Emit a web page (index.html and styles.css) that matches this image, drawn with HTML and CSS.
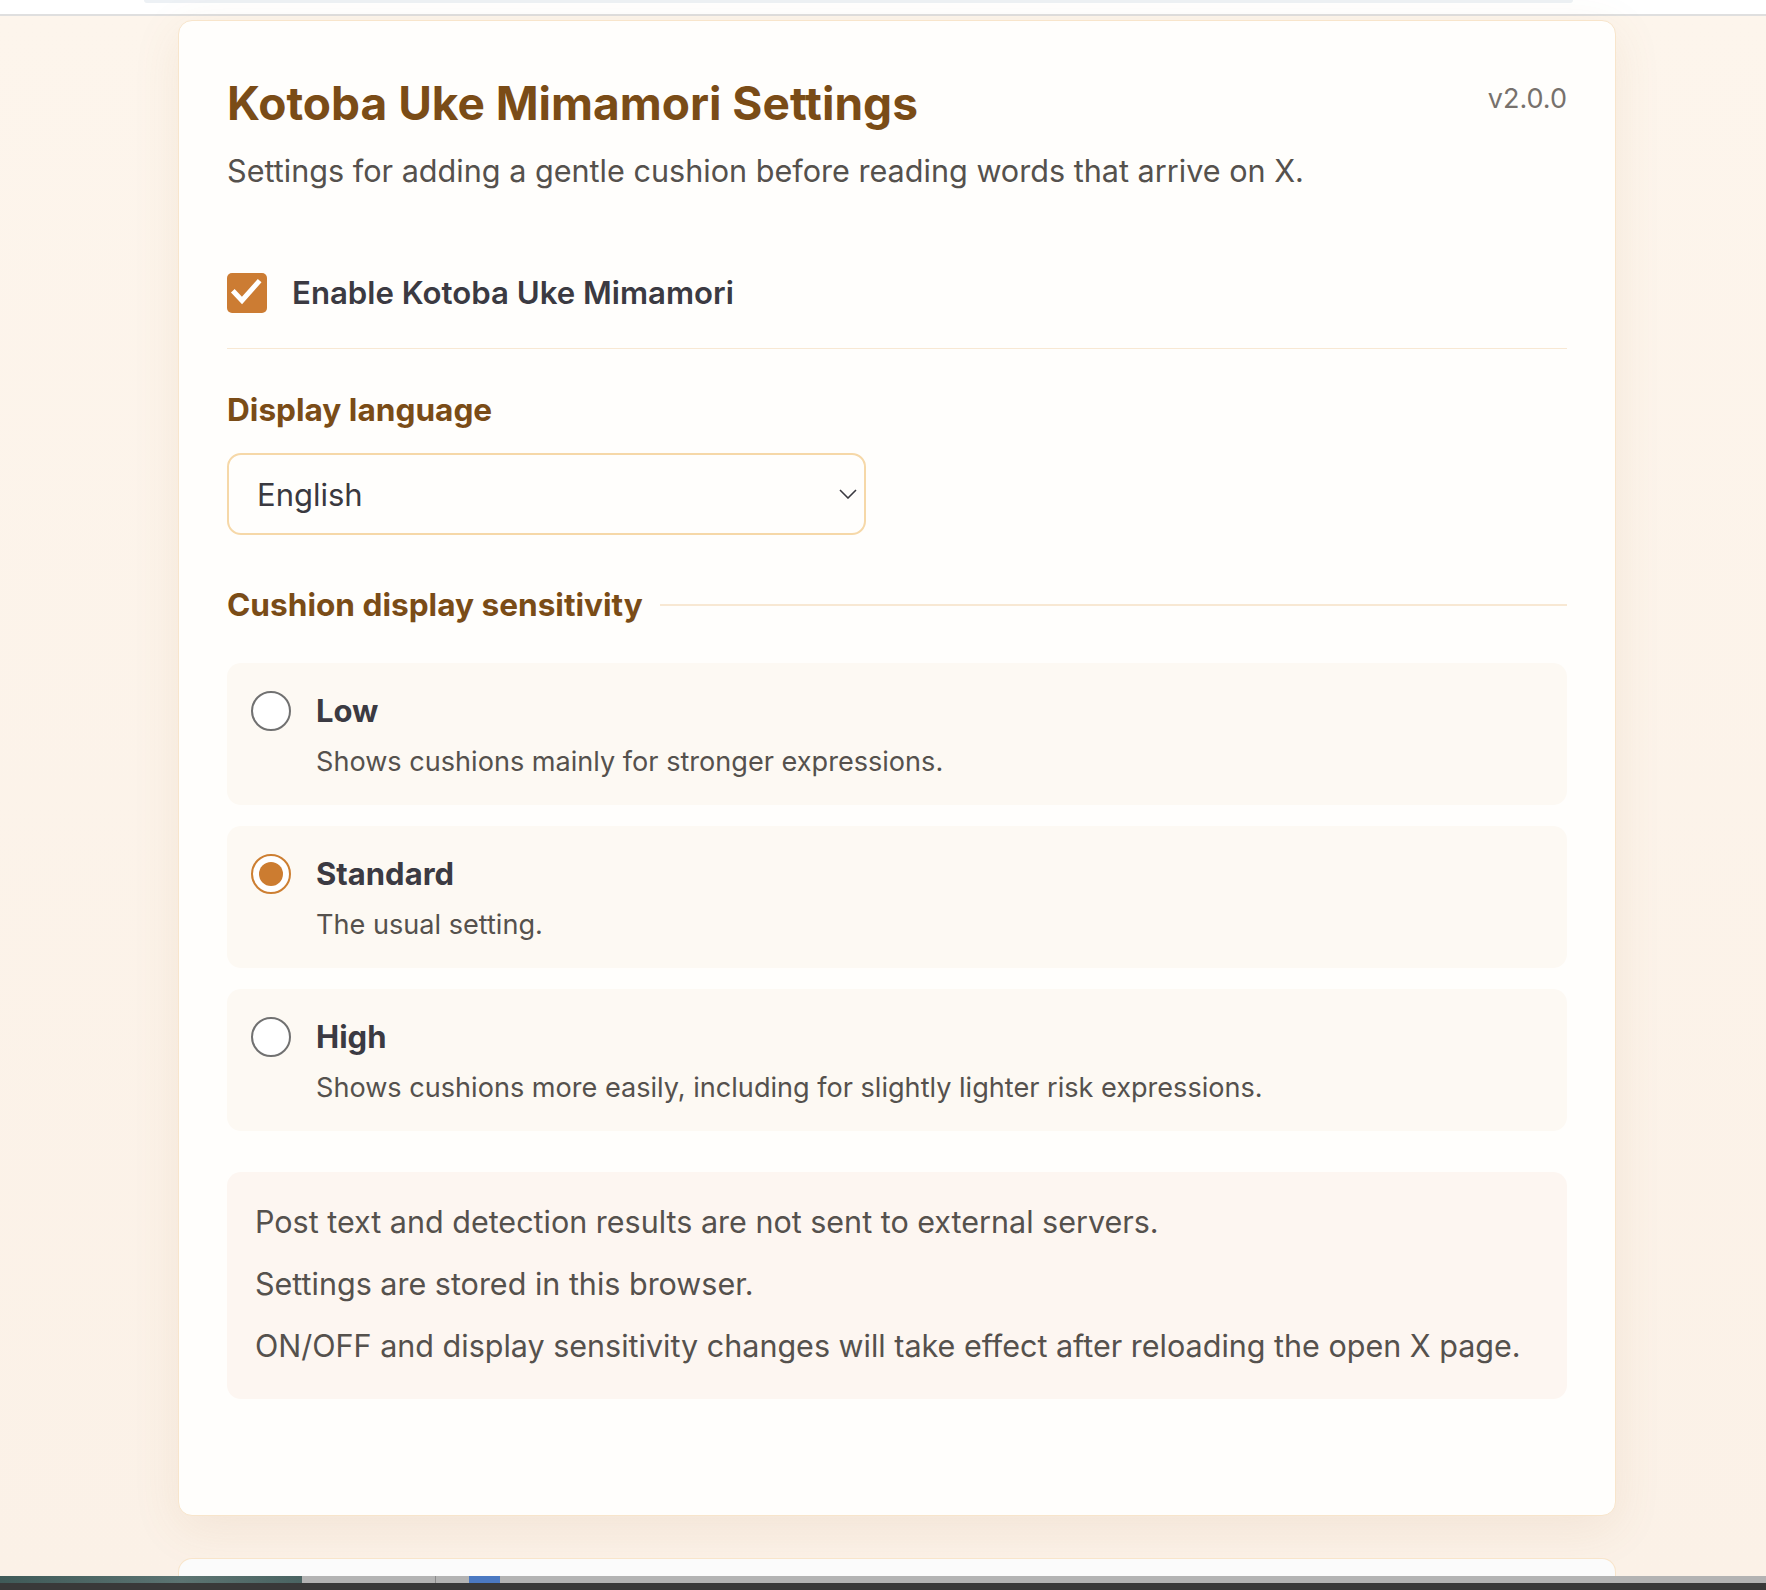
FILE: index.html
```html
<!DOCTYPE html>
<html lang="en">
<head>
<meta charset="utf-8">
<title>Kotoba Uke Mimamori Settings</title>
<link rel="stylesheet" href="styles.css">
</head>
<body>
<div class="topstrip"><div class="prev-edge"></div></div>
<div class="toprule"></div>
<main class="page">
  <section class="card">
    <header class="head">
      <h1 class="title">Kotoba Uke Mimamori Settings</h1>
      <span class="version">v2.0.0</span>
    </header>
    <p class="subtitle">Settings for adding a gentle cushion before reading words that arrive on X.</p>

    <label class="enable-row">
      <span class="checkbox">
        <svg width="40" height="40" viewBox="0 0 40 40"><path d="M7.5 19.5 L15 27.5 L31 9.5" fill="none" stroke="#fff" stroke-width="5" stroke-linecap="square" stroke-linejoin="miter"/></svg>
      </span>
      <span class="enable-label">Enable Kotoba Uke Mimamori</span>
    </label>

    <h2 class="section-title">Display language</h2>
    <div class="select">
      <span>English</span>
      <svg class="chev" width="18" height="10" viewBox="0 0 18 10"><path d="M1 1 L9 9 L17 1" fill="none" stroke="#3a3940" stroke-width="1.6"/></svg>
    </div>

    <div class="section-line">
      <h2 class="section-title inline">Cushion display sensitivity</h2>
      <span class="line"></span>
    </div>

    <div class="options">
      <div class="option">
        <span class="radio"></span>
        <span class="opt-label">Low</span>
        <span class="opt-desc">Shows cushions mainly for stronger expressions.</span>
      </div>
      <div class="option">
        <span class="radio checked"></span>
        <span class="opt-label">Standard</span>
        <span class="opt-desc">The usual setting.</span>
      </div>
      <div class="option">
        <span class="radio"></span>
        <span class="opt-label">High</span>
        <span class="opt-desc">Shows cushions more easily, including for slightly lighter risk expressions.</span>
      </div>
    </div>

    <div class="info">
      <p>Post text and detection results are not sent to external servers.</p>
      <p>Settings are stored in this browser.</p>
      <p>ON/OFF and display sensitivity changes will take effect after reloading the open X page.</p>
    </div>
  </section>
  <div class="next-card"></div>
</main>
<div class="taskbar">
  <div class="tb-img"></div>
  <div class="tb-sep"></div>
  <div class="tb-icon"></div>
</div>
<div class="taskbar-dark"></div>
</body>
</html>
```
FILE: styles.css
```css
* { box-sizing: border-box; }
html, body { margin: 0; padding: 0; }
body {
  width: 1766px;
  height: 1590px;
  overflow: hidden;
  background: #fdf5ec;
  font-family: Inter, "Noto Sans", "Liberation Sans", sans-serif;
  color: #3b3a42;
}
.topstrip {
  height: 14px;
  background: #ffffff;
}
.prev-edge {
  margin-left: 144px;
  width: 1429px;
  height: 3px;
  background: #edf1f5;
  border-radius: 0 0 6px 6px;
}
.toprule {
  height: 2px;
  background: #dfdfdf;
}
.page {
  padding: 4px 0 0 178px;
  height: 1560px;
  background: linear-gradient(#fdf5ec, #fbf1e7);
}
.card {
  width: 1438px;
  height: 1496px;
  background: #fffefc;
  border: 1.5px solid #f8e5cb;
  border-radius: 14px;
  box-shadow: 0 12px 48px rgba(170, 120, 60, 0.10);
  padding: 55px 48px 0 48px;
}
.head {
  display: flex;
  justify-content: space-between;
  align-items: flex-start;
}
.title {
  margin: 0;
  font-size: 46px;
  line-height: 54px;
  font-weight: 700;
  color: #7a4c17;
}
.version {
  margin-top: 5px;
  font-size: 27px;
  line-height: 35px;
  color: #77716c;
}
.subtitle {
  margin: 20px 0 0 0;
  font-size: 30.6px;
  line-height: 42px;
  color: #55514d;
}
.enable-row {
  display: flex;
  align-items: center;
  gap: 25px;
  margin-top: 81px;
  padding-bottom: 35px;
  border-bottom: 1.5px solid #f8e8d3;
}
.checkbox {
  width: 40px;
  height: 40px;
  border-radius: 5px;
  background: #cc7c33;
  display: block;
}
.checkbox svg { display: block; }
.enable-label {
  font-size: 31.2px;
  line-height: 40px;
  font-weight: 600;
  color: #3b3a42;
}
.section-title {
  margin: 41px 0 0 0;
  font-size: 31.6px;
  line-height: 40px;
  font-weight: 700;
  color: #7a4c17;
}
.select {
  margin-top: 23px;
  width: 639px;
  height: 82px;
  border: 2px solid #f6d8a8;
  border-radius: 14px;
  background: #fffefc;
  display: flex;
  align-items: center;
  justify-content: space-between;
  padding: 0 7px 0 28px;
  font-size: 31px;
  color: #3a3940;
}
.chev { display: block; }
.section-line {
  display: flex;
  align-items: center;
  gap: 17px;
  margin-top: 50px;
}
.section-title.inline { margin: 0; white-space: nowrap; }
.section-line .line {
  flex: 1;
  height: 1.5px;
  background: #f8e8d3;
}
.options {
  margin-top: 38px;
  display: flex;
  flex-direction: column;
  gap: 21px;
}
.option {
  display: grid;
  grid-template-columns: 40px 1fr;
  column-gap: 25px;
  row-gap: 12px;
  align-items: center;
  background: #fdf9f3;
  border-radius: 14px;
  padding: 28px 24px 25px 24px;
  height: 142px;
}
.radio {
  grid-row: 1;
  grid-column: 1;
  width: 40px;
  height: 40px;
  border-radius: 50%;
  border: 2.5px solid #717171;
  background: #ffffff;
  position: relative;
}
.radio.checked {
  border-color: #cd7f32;
}
.radio.checked::after {
  content: "";
  position: absolute;
  left: 5.5px;
  top: 5.5px;
  width: 24px;
  height: 24px;
  border-radius: 50%;
  background: #cc7c30;
}
.opt-label {
  grid-row: 1;
  grid-column: 2;
  font-size: 31px;
  line-height: 38px;
  font-weight: 700;
  color: #3b3a42;
}
.opt-desc {
  grid-row: 2;
  grid-column: 2;
  font-size: 27.1px;
  line-height: 38px;
  color: #55514d;
}
.info {
  margin-top: 41px;
  background: #fdf6f1;
  border-radius: 14px;
  padding: 29px 28px 31px 28px;
  height: 227px;
}
.info p {
  margin: 0 0 21px 0;
  font-size: 30.5px;
  line-height: 41px;
  color: #55514d;
}
.info p:last-child { margin-bottom: 0; }
.next-card {
  margin-top: 42px;
  width: 1438px;
  height: 30px;
  background: #fbfbfb;
  border: 1.5px solid #f8e5cb;
  border-bottom: none;
  border-radius: 14px 14px 0 0;
}
.taskbar {
  position: absolute;
  left: 0;
  top: 1576px;
  width: 1766px;
  height: 7px;
  background: #b3b3b3;
  display: flex;
  align-items: stretch;
}
.tb-img {
  width: 302px;
  background: linear-gradient(90deg, #3f5a58, #5c7472 60%, #4a6462);
}
.tb-sep {
  margin-left: 133px;
  width: 1px;
  background: #8a8a8a;
}
.tb-icon {
  margin-left: 33px;
  width: 31px;
  background: #4b79c2;
}
.taskbar-dark {
  position: absolute;
  left: 0;
  top: 1583px;
  width: 1766px;
  height: 7px;
  background: #393939;
}
```
